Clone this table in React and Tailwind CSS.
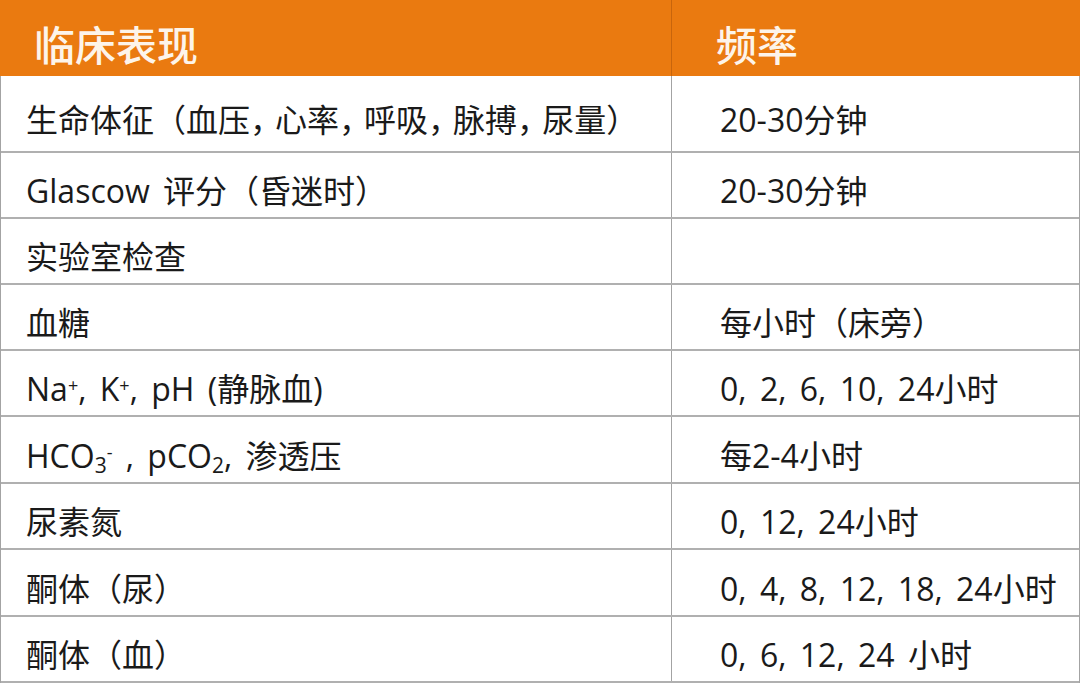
const C = () => <span className="tracking-[-7px]">，</span>;

const rows = [
  {
    h: "h-[77px]",
    left: (
      <>
        生命体征（血压<C />心率<C />呼吸<C />脉搏<C />尿量）
      </>
    ),
    right: "20-30分钟",
  },
  { h: "h-[66px]", left: "Glascow 评分（昏迷时）", right: "20-30分钟" },
  { h: "h-[66px]", left: "实验室检查", right: "" },
  { h: "h-[66px]", left: "血糖", right: "每小时（床旁）" },
  {
    h: "h-[66px]",
    left: (
      <>
        Na<sup className="text-[18px]">+</sup>, K<sup className="text-[18px]">+</sup>, pH (静脉血)
      </>
    ),
    right: "0, 2, 6, 10, 24小时",
  },
  {
    h: "h-[67px]",
    left: (
      <>
        HCO<sub className="text-[21px]">3</sub>
        <sup className="text-[18px]">-</sup> , pCO<sub className="text-[21px]">2</sub>, 渗透压
      </>
    ),
    right: "每2-4小时",
  },
  { h: "h-[66px]", left: "尿素氮", right: "0, 12, 24小时" },
  { h: "h-[67px]", left: "酮体（尿）", right: "0, 4, 8, 12, 18, 24小时" },
  { h: "h-[66px]", left: "酮体（血）", right: "0, 6, 12, 24 小时" },
];

export default function App() {
  return (
    <div
      className="h-[696px] w-[1080px] bg-white text-[#1a1a1a]"
      style={{ fontFamily: '"Open Sans", "Noto Sans CJK SC", sans-serif' }}
    >
      <div className="flex h-[76px] bg-[#ea7a10] text-[41px] font-medium text-[#fdf4ea]">
        <div className="flex w-[672px] items-center border-r border-[#c8650c] pl-[34px] pt-[16px]">
          临床表现
        </div>
        <div className="flex flex-1 items-center pl-[44px] pt-[16px]">频率</div>
      </div>
      <div className="border-x border-[#a3a3a3]">
        {rows.map((r, i) => (
          <div
            key={i}
            className={`flex border-b-2 border-[#b0b0b0] text-[32px] leading-none [word-spacing:5px] ${r.h}`}
          >
            <div className="flex w-[671px] items-center whitespace-nowrap border-r border-[#a3a3a3] pl-[25px] pt-[12px]">
              <span>{r.left}</span>
            </div>
            <div className="flex flex-1 items-center whitespace-nowrap pl-[48px] pt-[12px]">
              <span>{r.right}</span>
            </div>
          </div>
        ))}
      </div>
    </div>
  );
}
